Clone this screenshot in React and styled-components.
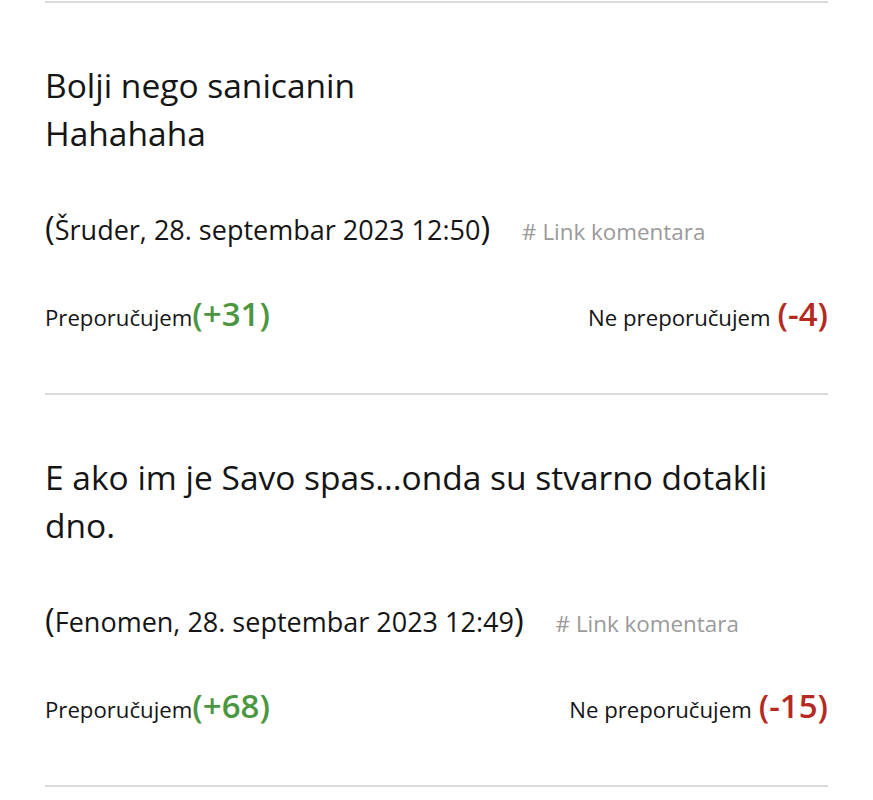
import React from "react";
import styled, { createGlobalStyle } from "styled-components";

const GlobalStyle = createGlobalStyle`
  body {
    margin: 0;
    background: #fff;
    font-family: "Open Sans", "Noto Sans", sans-serif;
    color: #151515;
  }
`;

const StyledList = styled.div`
  padding: 1px 45px 0;
`;

const StyledComment = styled.article`
  border-top: 2px solid #dadada;
  padding: 58px 0 59px;
`;

const StyledBody = styled.p`
  margin: 0;
  font-size: 33.5px;
  line-height: 48px;
`;

const StyledMeta = styled.div`
  display: flex;
  align-items: baseline;
  margin-top: 51px;
  height: 40px;
  line-height: 40px;
  font-size: 27px;
`;

const Paren = styled.span`
  font-size: 33px;
`;

const LinkComment = styled.a`
  margin-left: 32px;
  font-size: 22.4px;
  color: #9a9a9a;
  text-decoration: none;
`;

const StyledVotes = styled.div`
  display: flex;
  justify-content: space-between;
  align-items: baseline;
  margin-top: 46px;
  height: 40px;
  line-height: 40px;
  font-size: 22.2px;
`;

const Count = styled.span`
  font-size: 33px;
  font-weight: 600;
  color: ${({ $up }) => ($up ? "#4b973f" : "#b52a20")};
  margin-left: ${({ $gap }) => ($gap ? "7px" : "0")};
`;

const comments = [
  {
    lines: ["Bolji nego sanicanin", "Hahahaha"],
    author: "Šruder",
    date: "28. septembar 2023 12:50",
    up: 31,
    down: 4,
  },
  {
    lines: ["E ako im je Savo spas...onda su stvarno dotakli", "dno."],
    author: "Fenomen",
    date: "28. septembar 2023 12:49",
    up: 68,
    down: 15,
  },
];

const Comment = ({ lines, author, date, up, down }) => (
  <StyledComment>
    <StyledBody>
      {lines.map((l, i) => (
        <React.Fragment key={i}>
          {l}
          {i < lines.length - 1 && <br />}
        </React.Fragment>
      ))}
    </StyledBody>
    <StyledMeta>
      <span>
        <Paren>(</Paren>
        {author}, {date}
        <Paren>)</Paren>
      </span>
      <LinkComment href="#">#&nbsp;Link komentara</LinkComment>
    </StyledMeta>
    <StyledVotes>
      <span>
        Preporučujem<Count $up>(+{up})</Count>
      </span>
      <span>
        Ne preporučujem<Count $gap>(-{down})</Count>
      </span>
    </StyledVotes>
  </StyledComment>
);

const App = () => (
  <>
    <GlobalStyle />
    <StyledList>
      {comments.map((c, i) => (
        <Comment key={i} {...c} />
      ))}
      <StyledComment as="div" style={{ padding: 0 }} />
    </StyledList>
  </>
);

export default App;
